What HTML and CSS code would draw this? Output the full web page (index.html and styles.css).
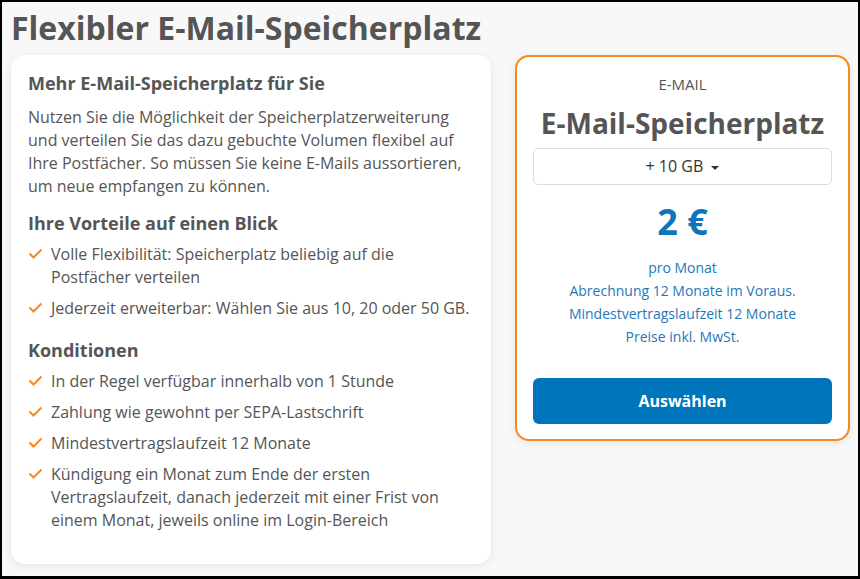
FILE: index.html
```html
<!DOCTYPE html>
<html lang="de">
<head>
<meta charset="utf-8">
<link rel="stylesheet" href="styles.css">
</head>
<body>
<div class="frame">
  <h1 class="title">Flexibler E-Mail-Speicherplatz</h1>
  <div class="row">
    <section class="info">
      <h2 class="h">Mehr E-Mail-Speicherplatz für Sie</h2>
      <p class="text">Nutzen Sie die Möglichkeit der Speicherplatzerweiterung und verteilen Sie das dazu gebuchte Volumen flexibel auf Ihre Postfächer. So müssen Sie keine E-Mails aussortieren, um neue empfangen zu können.</p>
      <h3 class="h h-sub">Ihre Vorteile auf einen Blick</h3>
      <ul class="list">
        <li><svg class="chk" viewBox="0 0 23 23" width="23" height="23"><path d="M1.5 10.5 L5.5 14.5 L13.5 6.5" fill="none" stroke="#f7891f" stroke-width="2"/></svg><span>Volle Flexibilität: Speicherplatz beliebig auf die Postfächer verteilen</span></li>
        <li><svg class="chk" viewBox="0 0 23 23" width="23" height="23"><path d="M1.5 10.5 L5.5 14.5 L13.5 6.5" fill="none" stroke="#f7891f" stroke-width="2"/></svg><span>Jederzeit erweiterbar: Wählen Sie aus 10, 20 oder 50 GB.</span></li>
      </ul>
      <h3 class="h h-sub">Konditionen</h3>
      <ul class="list">
        <li><svg class="chk" viewBox="0 0 23 23" width="23" height="23"><path d="M1.5 10.5 L5.5 14.5 L13.5 6.5" fill="none" stroke="#f7891f" stroke-width="2"/></svg><span>In der Regel verfügbar innerhalb von 1 Stunde</span></li>
        <li><svg class="chk" viewBox="0 0 23 23" width="23" height="23"><path d="M1.5 10.5 L5.5 14.5 L13.5 6.5" fill="none" stroke="#f7891f" stroke-width="2"/></svg><span>Zahlung wie gewohnt per SEPA-Lastschrift</span></li>
        <li><svg class="chk" viewBox="0 0 23 23" width="23" height="23"><path d="M1.5 10.5 L5.5 14.5 L13.5 6.5" fill="none" stroke="#f7891f" stroke-width="2"/></svg><span>Mindestvertragslaufzeit 12 Monate</span></li>
        <li><svg class="chk" viewBox="0 0 23 23" width="23" height="23"><path d="M1.5 10.5 L5.5 14.5 L13.5 6.5" fill="none" stroke="#f7891f" stroke-width="2"/></svg><span>Kündigung ein Monat zum Ende der ersten Vertragslaufzeit, danach jederzeit mit einer Frist von einem Monat, jeweils online im Login-Bereich</span></li>
      </ul>
    </section>
    <aside class="offer">
      <div class="cat">E-MAIL</div>
      <div class="name">E-Mail-Speicherplatz</div>
      <div class="select">+ 10 GB <span class="caret"></span></div>
      <div class="price">2 €</div>
      <div class="terms">
        <div>pro Monat</div>
        <div>Abrechnung 12 Monate im Voraus.</div>
        <div>Mindestvertragslaufzeit 12 Monate</div>
        <div>Preise inkl. MwSt.</div>
      </div>
      <button class="btn">Auswählen</button>
    </aside>
  </div>
</div>
</body>
</html>
```

FILE: styles.css
```css
html, body {
  margin: 0;
  padding: 0;
}
body {
  font-family: "Open Sans", "Noto Sans", sans-serif;
  color: #555;
}
.frame {
  box-sizing: border-box;
  width: 860px;
  height: 579px;
  border: 2px solid #000;
  border-bottom-width: 3px;
  background: #f8f8f8;
  padding: 0 6px 0 9px;
  overflow: hidden;
}
.title {
  margin: 4px 0 0 0;
  font-size: 32px;
  line-height: 44px;
  font-weight: 700;
  color: #555;
}
.row {
  display: flex;
  align-items: flex-start;
  gap: 24px;
  margin-top: 5px;
}
.info {
  box-sizing: border-box;
  flex: none;
  width: 480px;
  background: #fff;
  border-radius: 14px;
  box-shadow: 0 2px 8px rgba(0,0,0,0.08);
  padding: 14px 17px 27px 17px;
}
.h {
  margin: 0;
  font-size: 18px;
  line-height: 28px;
  font-weight: 700;
  color: #555;
}
.h-sub {
  margin-top: 11px;
}
.text {
  margin: 9px 0 0 0;
  font-size: 16px;
  line-height: 23px;
}
.list {
  list-style: none;
  margin: 6px 0 0 0;
  padding: 0 0 5px 0;
  display: flex;
  flex-direction: column;
  gap: 8px;
}
.list li {
  display: flex;
  font-size: 16px;
  line-height: 23px;
}
.chk {
  flex: none;
  display: block;
}
.offer {
  box-sizing: border-box;
  flex: none;
  width: 335px;
  background: #fff;
  border: 2px solid #f7891f;
  border-radius: 14px;
  box-shadow: 0 2px 8px rgba(0,0,0,0.08);
  padding: 15px 16px 15px 16px;
  text-align: center;
}
.cat {
  font-size: 15px;
  line-height: 24px;
  color: #555;
}
.name {
  font-size: 28px;
  line-height: 40px;
  font-weight: 700;
  margin-top: 7px;
  color: #555;
}
.select {
  margin-top: 5px;
  height: 37px;
  box-sizing: border-box;
  border: 1px solid #ddd;
  border-radius: 5px;
  font-size: 16px;
  line-height: 35px;
  color: #333;
}
.caret {
  display: inline-block;
  width: 0;
  height: 0;
  border-left: 4px solid transparent;
  border-right: 4px solid transparent;
  border-top: 4px solid #333;
  vertical-align: middle;
  margin-left: 4px;
}
.price {
  margin-top: 13px;
  font-size: 36px;
  line-height: 48px;
  font-weight: 700;
  color: #0e75b8;
}
.terms {
  margin-top: 10px;
  font-size: 14px;
  line-height: 23px;
  color: #1f77bb;
}
.btn {
  display: block;
  width: 100%;
  margin-top: 30px;
  height: 46px;
  border: 0;
  border-radius: 6px;
  background: #0075bc;
  color: #fff;
  font-family: "Open Sans", "Noto Sans", sans-serif;
  font-size: 16px;
  font-weight: 700;
}
```
